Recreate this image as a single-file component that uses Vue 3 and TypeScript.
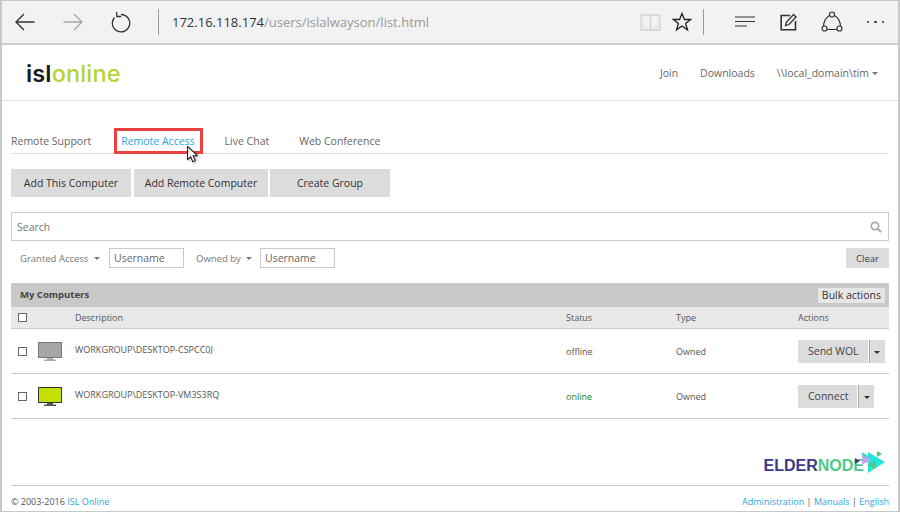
<script setup lang="ts">
interface Computer { name: string; status: string; action: string; online: boolean }
const tabs: string[] = ['Remote Support', 'Remote Access', 'Live Chat', 'Web Conference']
const actions: string[] = ['Add This Computer', 'Add Remote Computer', 'Create Group']
const computers: Computer[] = [
  { name: 'WORKGROUP\\DESKTOP-CSPCC0J', status: 'offline', action: 'Send WOL', online: false },
  { name: 'WORKGROUP\\DESKTOP-VM3S3RQ', status: 'online', action: 'Connect', online: true }
]
</script>

<template>
  <div class="window">
    <div class="chrome">
      <div class="nav">
        <svg width="22" height="22" viewBox="0 0 22 22"><path d="M20.500 11H2.500M10 3l-8 8 8 8" fill="none" stroke="#333" stroke-width="1.400"/></svg>
        <svg width="22" height="22" viewBox="0 0 22 22"><path d="M1.500 11H19.500M12 3l8 8-8 8" fill="none" stroke="#a8a8a8" stroke-width="1.400"/></svg>
        <svg class="reload" width="20" height="22" viewBox="0 0 20 22"><path d="M10 3.500A8.700 8.700 0 1 1 3.500 6.500M5.500 1l.4 4.500h4.300" fill="none" stroke="#333" stroke-width="1.300"/></svg>
      </div>
      <div class="sep"></div>
      <div class="url"><span class="host">172.16.118.174</span><span class="path">/users/islalwayson/list.html</span></div>
      <div class="tools">
        <svg width="21" height="19" viewBox="0 0 21 19"><path d="M1 2h19v15H1zM10.500 2v15" fill="none" stroke="#d2d2d2" stroke-width="1.300"/><path d="M3 4v10.500h5.500M18 4v10.500h-5.500" fill="none" stroke="#e0e0e0" stroke-width="1"/></svg>
        <svg class="star" width="20" height="20" viewBox="0 0 20 20"><path d="M10 1.500l2.400 6h6.200l-5 3.900 1.900 6.400-5.500-3.800-5.500 3.800 1.900-6.400-5-3.900h6.200z" fill="none" stroke="#222" stroke-width="1.300"/></svg>
        <div class="sep small"></div>
        <svg width="21" height="12" viewBox="0 0 21 12"><path d="M0 1h20M0 5.500h20M0 10h12" fill="none" stroke="#333" stroke-width="1.200"/></svg>
        <svg class="note" width="18" height="18" viewBox="0 0 18 18"><path d="M10 2.500H1.200v14.300h14.300V8" fill="none" stroke="#333" stroke-width="1.600"/><path d="M5.500 12.500l1-3.500 7-7.500 2.500 2.500-7 7.500z" fill="none" stroke="#333" stroke-width="1.300"/></svg>
        <svg class="share" width="22" height="22" viewBox="0 0 22 22"><g fill="none" stroke="#333" stroke-width="1.200"><circle cx="11" cy="3.500" r="2.500"/><circle cx="3.500" cy="17.500" r="2.500"/><circle cx="18.500" cy="17.500" r="2.500"/><path d="M8.500 4.500C4.500 7 2.800 10.500 2.500 15M13.500 4.500c4 2.500 5.700 6 6 10.500M6 18.500h10"/></g></svg>
        <div class="dots"><i></i><i></i><i></i></div>
      </div>
    </div>

    <div class="page">
      <header class="site">
        <div class="logo"><span class="isl">isl</span><span class="online">online</span></div>
        <nav class="topnav">
          <a>Join</a><a>Downloads</a><a class="user">\\local_domain\tim<b class="caret"></b></a>
        </nav>
      </header>

      <main class="content">
        <div class="tabs">
          <a v-for="t in tabs" :key="t" class="tab" :class="{ active: t === 'Remote Access' }">{{ t }}
            <template v-if="t === 'Remote Access'">
              <span class="mark"></span>
              <svg class="cursor" width="14" height="19" viewBox="0 0 18 24"><path d="M2 1.500v17l4-3.600 2.800 6.300 3.200-1.400-2.800-6.100 5.500-.2z" fill="#fff" stroke="#222" stroke-width="1.400" stroke-linejoin="round"/></svg>
            </template>
          </a>
        </div>

        <div class="actions">
          <button v-for="a in actions" :key="a" class="act">{{ a }}</button>
        </div>

        <div class="search">
          <span>Search</span>
          <svg width="12" height="12" viewBox="0 0 14 14"><circle cx="5.800" cy="5.800" r="4.300" fill="none" stroke="#aaa" stroke-width="2"/><path d="M9 9l4 4" stroke="#aaa" stroke-width="2.400"/></svg>
        </div>

        <div class="filters">
          <span class="flabel first">Granted Access <b class="caret"></b></span>
          <span class="input">Username</span>
          <span class="flabel second">Owned by <b class="caret"></b></span>
          <span class="input">Username</span>
          <button class="clear">Clear</button>
        </div>

        <div class="title"><strong>My Computers</strong><span class="bulk">Bulk actions</span></div>
        <div class="row head">
          <span class="check-cell"><i class="check"></i></span>
          <span>Description</span><span>Status</span><span>Type</span><span>Actions</span>
        </div>
        <div v-for="c in computers" :key="c.name" class="row item">
          <span class="check-cell">
            <i class="check"></i>
            <svg class="monitor" width="24" height="19" viewBox="0 0 24 19">
              <rect x="0.500" y="0.500" width="23" height="15" :fill="c.online ? '#c4e000' : '#a6a6a6'" :stroke="c.online ? '#333' : '#777'"/>
              <path d="M9 16h6v1.500h3V19H6v-1.500h3z" :fill="c.online ? '#555' : '#aaa'"/>
            </svg>
          </span>
          <span class="name">{{ c.name }}</span>
          <span :class="{ on: c.online }">{{ c.status }}</span>
          <span>Owned</span>
          <span class="split"><button class="main">{{ c.action }}</button><button class="more"><b class="caret dark"></b></button></span>
        </div>
      </main>

      <footer class="foot">
        <div class="brand">
          <span class="word"><span class="e">ELDER</span><span class="n">NODE</span></span>
          <svg class="play" width="32" height="24" viewBox="0 0 32 24">
            <path d="M14 2l17 10-17 11z" fill="#22e6dc"/><path d="M8 2l8 5-8 5z" fill="#4fd0d8"/><path d="M8 5l9 5.500-9 4z" fill="#c6a4ea"/><path d="M21 11v8l-8-4z" fill="#4bc98a"/><path d="M1 8l5 3-5 3z" fill="#3d3a8c"/><path d="M23 1l5 3-5 3z" fill="#4bc98a"/>
          </svg>
        </div>
        <div class="legal">
          <span>© 2003-2016 <a>ISL Online</a></span>
          <span><a>Administration</a> | <a>Manuals</a> | <a>English</a></span>
        </div>
      </footer>
    </div>
  </div>
</template>

<style>
html, body { margin: 0; background: #fff; }
</style>

<style scoped>
* { box-sizing: border-box; }
.window {
  width: 900px; height: 512px; border: 1px solid #c8c8c8; border-right-width: 2px; border-left-width: 2px;
  display: flex; flex-direction: column; overflow: hidden;
  font-family: "Open Sans", sans-serif; color: #555; background: #fff; font-size: 10.500px;
}
.chrome { height: 44px; flex: none; display: flex; align-items: center; background: #f2f2f2; border-bottom: 2px solid #cfcfcf; }
.nav { display: flex; align-items: center; gap: 26px; padding-left: 12px; width: 156px; }
.reload { margin-left: 1px; }
.sep { width: 1px; height: 26px; background: #999; }
.sep.small { margin: 0 31px 0 11px; }
.url { margin-left: 13px; font-size: 13px; flex: 1; }
.host { color: #333; }
.path { color: #9a9a9a; }
.tools { display: flex; align-items: center; padding-right: 21px; }
.star { margin-left: 11px; }
.note { margin-left: 24px; }
.share { margin-left: 23px; }
.dots { display: flex; gap: 5px; margin-left: 24px; margin-right: -7px; }
.dots i { width: 2.500px; height: 2.500px; background: #333; border-radius: 50%; }
.page { flex: 1; display: flex; flex-direction: column; min-height: 0; }
.site { height: 56px; flex: none; display: flex; align-items: center; justify-content: space-between; padding: 0 20px 0 24px; border-bottom: 1px solid #e0e0e0; }
.logo { font-family: Inter, sans-serif; font-size: 23.500px; line-height: 1; margin-top: 3px; letter-spacing: 0.15px; }
.isl { color: #1a1a1a; font-weight: 600; }
.online { color: #b5d334; font-weight: 500; }
.topnav { display: flex; gap: 22px; color: #666; font-size: 10.500px; }
.caret { display: inline-block; width: 0; height: 0; border: 3px solid transparent; border-top-color: #777; border-bottom: 0; margin-left: 3px; vertical-align: middle; }
.caret.dark { border-top-color: #333; margin: 0; }
.content { padding: 0 9px; flex: none; }
.tabs { height: 53px; display: flex; gap: 30px; align-items: flex-end; padding-bottom: 4px; border-bottom: 1px solid #e0e0e0; font-size: 10.500px; color: #666; }
.tab { position: relative; line-height: 15px; }
.tab.active { color: #2ea6e0; }
.mark { position: absolute; left: -7px; right: -8px; top: -6px; height: 26px; border: 3px solid #ec4141; }
.cursor { position: absolute; left: 65px; top: 11px; filter: drop-shadow(1px 1px 1px rgba(0,0,0,.3)); }
.actions { display: flex; gap: 3px; margin-top: 15px; }
.act { height: 28px; padding: 0; width: 120px; border: 0; background: #dcdcdc; font: inherit; color: #333; }
.act:nth-child(2) { width: 134px; margin-right: -1px; }
.search { margin-top: 15px; height: 29px; border: 1px solid #c8c8c8; display: flex; align-items: center; justify-content: space-between; padding: 0 6px 0 5px; color: #777; }
.filters { display: flex; align-items: center; height: 20px; margin-top: 7px; color: #777; font-size: 9.500px; }
.flabel.first { margin-left: 9px; width: 89px; }
.flabel.second { margin-left: 12px; width: 64px; }
.input { width: 75px; height: 20px; border: 1px solid #c8c8c8; padding-left: 4px; line-height: 18px; font-size: 10.500px; color: #666; }
.clear { margin-left: auto; width: 43px; height: 20px; border: 0; background: #dcdcdc; font: inherit; color: #444; }
.title { margin-top: 15px; height: 24px; background: #c8c8c8; display: flex; align-items: center; justify-content: space-between; padding: 0 4px 0 9px; color: #444; font-size: 9.500px; }
.title strong { margin-top: -2px; }
.bulk { background: #e6e6e6; padding: 0 4px; height: 15px; line-height: 15px; color: #333; font-size: 10.500px; }
.row { display: grid; grid-template-columns: 64px 491px 110px 122px 1fr; align-items: center; border-bottom: 1px solid #c8c8c8; font-size: 9px; color: #555; }
.head { height: 22px; background: #e8e8e8; }
.item { height: 45px; }
.check-cell { display: flex; align-items: center; padding-left: 7px; }
.check { width: 9px; height: 9px; border: 1px solid #666; background: #fff; }
.monitor { margin-left: 11px; }
.name { margin-top: -3px; }
.on { color: #1f7f1f; }
.split { display: flex; gap: 1px; }
.split button { height: 23px; border: 0; background: #dcdcdc; font: inherit; color: #444; padding: 0; }
.split .main { padding: 0 9px 0 10px; font-size: 10.500px; }
.split .more { width: 16px; border-left: 1px solid #aaa; }
.foot { margin-top: auto; padding: 0 9px 0; }
.brand { display: flex; justify-content: flex-end; align-items: flex-end; padding-right: 3px; height: 26px; }
.word { font-family: "Liberation Sans", sans-serif; font-weight: 700; font-size: 16px; letter-spacing: 0; line-height: 17px; }
.e { color: #3d3a8c; }
.n { color: #4bc98a; }
.play { margin-left: -10px; }
.legal { margin-top: 11px; height: 26px; padding-top: 5px; border-top: 1px solid #c8c8c8; display: flex; justify-content: space-between; align-items: center; font-size: 9px; color: #555; }
.legal a { color: #2ea6e0; }
</style>
